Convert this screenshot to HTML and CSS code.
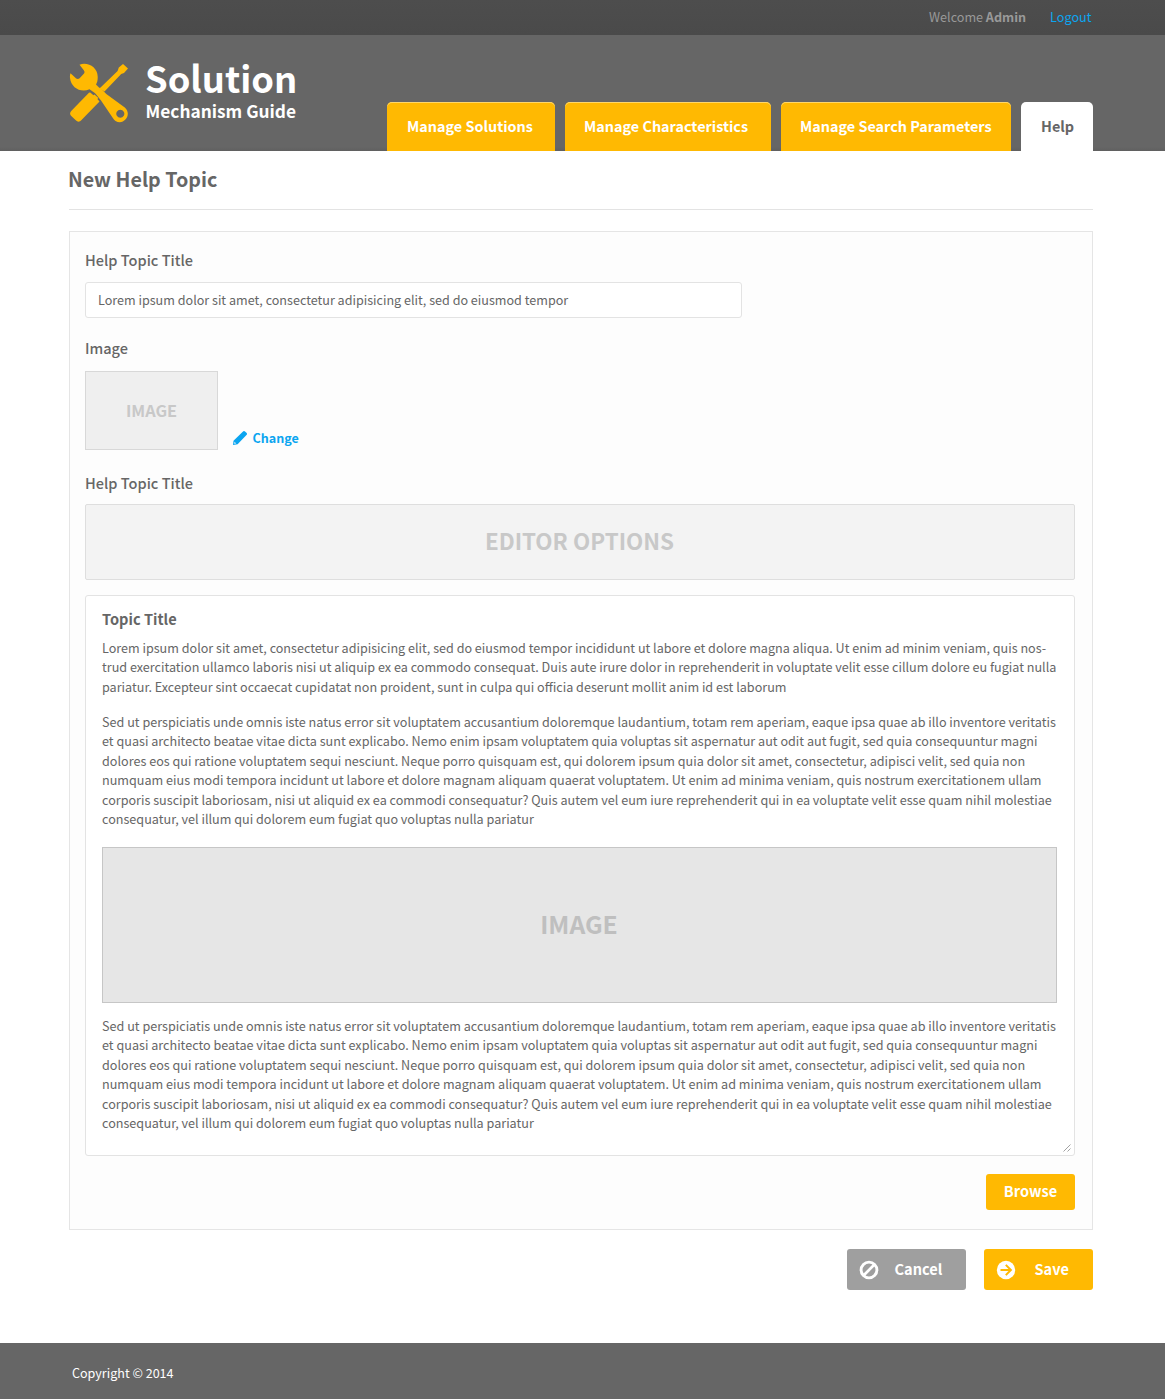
FILE: index.html
```html
<!DOCTYPE html>
<html lang="en">
<head>
<meta charset="utf-8">
<title>Solution Mechanism Guide</title>
<link rel="stylesheet" href="styles.css">
</head>
<body>
<div class="topbar">
  <div class="wrap topbar-in">
    <span class="welcome">Welcome <b>Admin</b></span>
    <a class="logout">Logout</a>
  </div>
</div>
<header class="header">
  <div class="wrap header-in">
    <div class="logo">
      <svg class="logo-icon" width="60" height="60" viewBox="0 0 60 60">
        <g fill="#ffb902">
          <path d="M10.500 1.700 C19 -1.500 28.500 4.500 28.700 13.500 C28.800 16.500 28.500 19 27 21.500 L31 25.500 L26.500 30.500 L20.500 26.300 C12 30 2 25 1 15 C.8 13 1 11.500 1.500 10.200 L7.200 15.500 C8.500 16.300 9.800 16 10.600 15.200 L14.800 10.800 C15.800 9.700 15.700 8.300 14.800 7.200 Z"/>
          <path d="M21.500 29.700 L24.500 32.300 L25.500 31.400 L29.300 35 L28.400 36 L30.500 38.500 L12.500 57 C10.500 59.300 8.500 59 6.800 57.300 L2 52.700 C.7 51.300 .8 49.500 2.200 48 L19 30.800 C19.800 29.900 20.600 29.200 21.500 29.700 Z"/>
          <path d="M48.600 8 L49.800 4.600 L54 1 L59 5.600 L55 10 L52.200 11 L35.500 28.500 L30.500 25.500 Z"/>
          <path fill-rule="evenodd" d="M31 24.500 L37.300 31 L55.800 44.500 C63.500 51.500 55 63 46.500 58 C45.500 57.300 44.600 56.300 44 55.200 L32 37.500 L26 30 Z M51.300 46.700 A4 4 0 1 0 51.310 46.700 Z"/>
        </g>
      </svg>
      <div class="logo-text">
        <div class="logo-name">Solution</div>
        <div class="logo-sub">Mechanism Guide</div>
      </div>
    </div>
    <nav class="tabs">
      <a class="tab tab-solutions">Manage Solutions</a>
      <a class="tab tab-chars">Manage Characteristics</a>
      <a class="tab tab-params">Manage Search Parameters</a>
      <a class="tab tab-help">Help</a>
    </nav>
  </div>
</header>
<main class="wrap">
  <h1 class="title">New Help Topic</h1>
  <section class="panel">
    <div class="label">Help Topic Title</div>
    <div class="input">Lorem ipsum dolor sit amet, consectetur adipisicing elit, sed do eiusmod tempor</div>
    <div class="label label-image">Image</div>
    <div class="image-row">
      <div class="thumb">IMAGE</div>
      <a class="change">
        <svg width="14" height="14" viewBox="0 0 14 14"><path fill="#0ba5f0" fill-rule="evenodd" d="M9 1.500 L10.300 .3 Q11.200 -.3 12 .4 L13.700 2.100 Q14.300 2.900 13.700 3.700 L4.600 13.200 L0 14 L.5 9.700 Z M1.600 10.800 L1.200 12.700 L3.100 12.400 Z"/></svg>
        <span>Change</span>
      </a>
    </div>
    <div class="label label-editor">Help Topic Title</div>
    <div class="options">EDITOR OPTIONS</div>
    <div class="editor">
      <h2 class="topic">Topic Title</h2>
      <p><span class="first">Lorem ipsum dolor sit amet, consectetur adipisicing elit, sed do eiusmod tempor incididunt ut labore et dolore magna aliqua. Ut enim ad minim veniam, quis nos-</span><br>trud exercitation ullamco laboris nisi ut aliquip ex ea commodo consequat. Duis aute irure dolor in reprehenderit in voluptate velit esse cillum dolore eu fugiat nulla<br>pariatur. Excepteur sint occaecat cupidatat non proident, sunt in culpa qui officia deserunt mollit anim id est laborum</p>
      <p>Sed ut perspiciatis unde omnis iste natus error sit voluptatem accusantium doloremque laudantium, totam rem aperiam, eaque ipsa quae ab illo inventore veritatis<br>et quasi architecto beatae vitae dicta sunt explicabo. Nemo enim ipsam voluptatem quia voluptas sit aspernatur aut odit aut fugit, sed quia consequuntur magni<br>dolores eos qui ratione voluptatem sequi nesciunt. Neque porro quisquam est, qui dolorem ipsum quia dolor sit amet, consectetur, adipisci velit, sed quia non<br>numquam eius modi tempora incidunt ut labore et dolore magnam aliquam quaerat voluptatem. Ut enim ad minima veniam, quis nostrum exercitationem ullam<br>corporis suscipit laboriosam, nisi ut aliquid ex ea commodi consequatur? Quis autem vel eum iure reprehenderit qui in ea voluptate velit esse quam nihil molestiae<br>consequatur, vel illum qui dolorem eum fugiat quo voluptas nulla pariatur</p>
      <div class="figure">IMAGE</div>
      <p>Sed ut perspiciatis unde omnis iste natus error sit voluptatem accusantium doloremque laudantium, totam rem aperiam, eaque ipsa quae ab illo inventore veritatis<br>et quasi architecto beatae vitae dicta sunt explicabo. Nemo enim ipsam voluptatem quia voluptas sit aspernatur aut odit aut fugit, sed quia consequuntur magni<br>dolores eos qui ratione voluptatem sequi nesciunt. Neque porro quisquam est, qui dolorem ipsum quia dolor sit amet, consectetur, adipisci velit, sed quia non<br>numquam eius modi tempora incidunt ut labore et dolore magnam aliquam quaerat voluptatem. Ut enim ad minima veniam, quis nostrum exercitationem ullam<br>corporis suscipit laboriosam, nisi ut aliquid ex ea commodi consequatur? Quis autem vel eum iure reprehenderit qui in ea voluptate velit esse quam nihil molestiae<br>consequatur, vel illum qui dolorem eum fugiat quo voluptas nulla pariatur</p>
      <svg class="grip" width="8" height="8" viewBox="0 0 8 8"><path d="M.5 7.500 L7.500 .5 M4.500 7.500 L7.500 4.500" stroke="#8a8a8a" stroke-width=".8"/></svg>
    </div>
    <a class="browse">Browse</a>
  </section>
  <div class="actions">
    <a class="btn btn-cancel">
      <svg width="20" height="20" viewBox="0 0 20 20"><circle cx="10" cy="10" r="7.900" fill="none" stroke="#fff" stroke-width="2.900"/><path d="M4.800 15.200 L15.200 4.800" stroke="#fff" stroke-width="2.700"/></svg>
      <span>Cancel</span>
    </a>
    <a class="btn btn-save">
      <svg width="20" height="20" viewBox="0 0 20 20"><circle cx="10" cy="10" r="9.200" fill="#fff"/><path d="M4.500 10 H14.500 M9.800 4.900 L14.900 10 L9.800 15.100" fill="none" stroke="#ffb902" stroke-width="2"/></svg>
      <span>Save</span>
    </a>
  </div>
</main>
<footer class="footer"><div class="wrap footer-in">Copyright © 2014</div></footer>
</body>
</html>
```
FILE: styles.css
```css
* { box-sizing: border-box; }
body {
  margin: 0;
  background: #fff;
  color: #666;
  font-family: "Noto Sans CJK SC", "Noto Sans", sans-serif;
  font-size: 12.620px;
  line-height: 19.500px;
}
svg { display: block; flex: none; }
.wrap { width: 1024px; margin-left: 69px; }

.topbar { height: 35px; background: linear-gradient(#4d4d4d, #4a4a4a); }
.topbar-in { display: flex; justify-content: flex-end; padding-right: 1.500px; line-height: 33px; color: #999; font-size: 12.600px; }
.welcome { margin-right: 24px; }
.logout { color: #0ba5f0; font-size: 12.650px; }

.header { height: 116px; background: linear-gradient(#666 112px, #606060); }
.header-in { height: 116px; display: flex; justify-content: space-between; align-items: flex-end; }
.logo { align-self: flex-start; display: flex; padding-top: 22px; }
.logo-icon { margin-top: 6px; }
.logo-text { margin-left: 16px; color: #fff; font-weight: 700; }
.logo-name { font-size: 36.300px; line-height: 40px; }
.logo-sub { font-size: 17.300px; line-height: 24px; margin: 2px 0 0 .500px; }
.tabs { display: flex; gap: 10px; }
.tab {
  height: 49px;
  padding-left: 19px;
  border-radius: 5px 5px 0 0;
  background: #ffb902;
  box-shadow: inset 0 1px 0 #ffd76b;
  color: #fff;
  font-size: 14.400px;
  font-weight: 700;
  line-height: 48px;
  white-space: nowrap;
}
.tab-solutions { width: 168px; padding-left: 20px; }
.tab-chars { width: 206px; }
.tab-params { width: 230px; }
.tab-help { width: 72px; padding-left: 20px; background: #fff; box-shadow: none; color: #666; }

.title {
  height: 59px;
  margin: 0 0 21px;
  border-bottom: 1px solid #e3e3e3;
  font-size: 19.700px;
  font-weight: 700;
  line-height: 55px;
  text-indent: -1px;
}
.panel {
  height: 999px;
  padding: 18px 17px 0 15px;
  border: 1px solid #e5e5e5;
  background: #fdfdfd;
}
.label { height: 20px; font-size: 14.550px; font-weight: 500; line-height: 20px; }
.label-image { margin-top: 20px; }
.label-editor { margin-top: 23px; }
.input {
  width: 657px;
  height: 36px;
  margin-top: 12px;
  padding-left: 12px;
  border: 1px solid #e3e3e3;
  border-radius: 3px;
  background: #fff;
  font-size: 12.590px;
  line-height: 34px;
  white-space: nowrap;
}
.image-row { display: flex; margin-top: 13px; align-items: flex-end; }
.thumb {
  width: 133px;
  height: 79px;
  border: 1px solid #d8d8d8;
  background: #efefef;
  color: #c8c8c8;
  font-size: 16.300px;
  font-weight: 700;
  line-height: 77px;
  text-align: center;
}
.change { display: flex; align-items: center; gap: 5.500px; height: 20px; margin: 0 0 2px 15px; color: #0ba5f0; font-size: 12.550px; font-weight: 700; line-height: 20px; }
.options {
  height: 76px;
  margin-top: 11px;
  border: 1px solid #dedede;
  border-radius: 2px;
  background: #f3f3f3;
  color: #c8c8c8;
  font-size: 22.400px;
  font-weight: 700;
  line-height: 70px;
  text-align: center;
  text-indent: -1px;
}
.editor {
  position: relative;
  height: 561px;
  margin-top: 15px;
  padding: 12px 17px 0 16px;
  border: 1px solid #e3e3e3;
  border-radius: 3px;
  background: #fff;
}
.topic { height: 20px; margin: 0 0 9.500px; font-size: 14.600px; font-weight: 700; line-height: 22px; }
.editor p { margin: 0 0 15.500px; white-space: nowrap; }
.first { font-size: 12.590px; }
.figure {
  height: 156px;
  margin: 18px 0 13px;
  border: 1px solid #c6c6c6;
  background: #e6e6e6;
  color: #bfbfbf;
  font-size: 24.700px;
  font-weight: 700;
  line-height: 150px;
  text-align: center;
  text-indent: -1px;
}
.grip { position: absolute; right: 3px; bottom: 3px; }
.browse {
  display: block;
  width: 89px;
  height: 36px;
  margin: 18px 0 0 auto;
  border-radius: 3px;
  background: #ffb902;
  color: #fff;
  font-size: 14.550px;
  font-weight: 700;
  line-height: 34px;
  text-align: center;
}
.actions { display: flex; justify-content: flex-end; gap: 18px; margin-top: 19px; }
.btn { display: flex; align-items: center; height: 41px; border-radius: 3px; color: #fff; font-size: 14.550px; font-weight: 700; line-height: 40px; }
.btn span { margin-top: -1px; }
.btn-cancel { width: 119px; padding-left: 12px; gap: 15.500px; background: #9f9f9f; }
.btn-save { width: 109px; padding-left: 12px; gap: 18.500px; background: #ffb902; }
.footer { height: 56px; margin-top: 53px; background: #666; }
.footer-in { padding-left: 3px; color: #fff; font-size: 12.550px; line-height: 60px; }
```
